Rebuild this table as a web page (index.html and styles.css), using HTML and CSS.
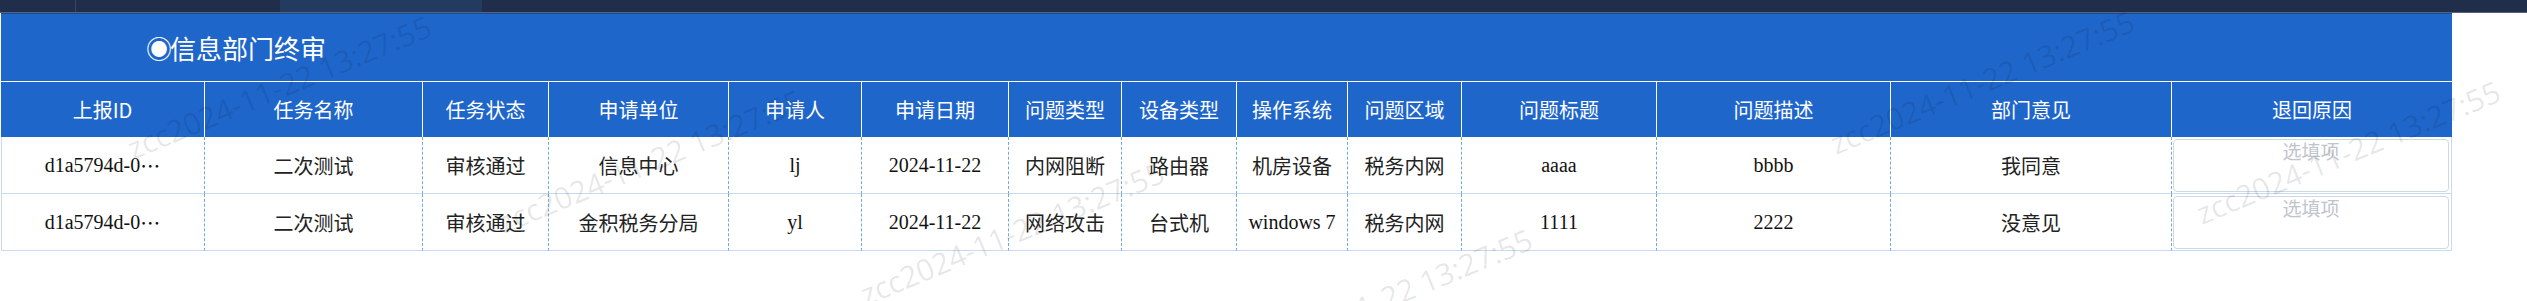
FILE: index.html
```html
<!DOCTYPE html>
<html lang="zh-CN">
<head>
<meta charset="utf-8">
<title>信息部门终审</title>
<link rel="stylesheet" href="styles.css">
</head>
<body>
<header class="topbar">
  <div class="tab tab-a"></div>
  <div class="tab tab-b"></div>
  <div class="tab tab-c"></div>
  <div class="tab tab-rest"></div>
</header>
<main class="panel">
  <h1 class="title"><span class="dot">◉</span>信息部门终审</h1>
  <div class="table">
    <div class="row head">
      <div class="cell">上报ID</div>
      <div class="cell">任务名称</div>
      <div class="cell">任务状态</div>
      <div class="cell">申请单位</div>
      <div class="cell">申请人</div>
      <div class="cell">申请日期</div>
      <div class="cell">问题类型</div>
      <div class="cell">设备类型</div>
      <div class="cell">操作系统</div>
      <div class="cell">问题区域</div>
      <div class="cell">问题标题</div>
      <div class="cell">问题描述</div>
      <div class="cell">部门意见</div>
      <div class="cell">退回原因</div>
    </div>
    <div class="row data">
      <div class="cell first"><span class="lat">d1a5794d-0</span><span class="ell">…</span></div>
      <div class="cell">二次测试</div>
      <div class="cell">审核通过</div>
      <div class="cell">信息中心</div>
      <div class="cell"><span class="lat">lj</span></div>
      <div class="cell"><span class="lat">2024-11-22</span></div>
      <div class="cell">内网阻断</div>
      <div class="cell">路由器</div>
      <div class="cell">机房设备</div>
      <div class="cell">税务内网</div>
      <div class="cell"><span class="lat">aaaa</span></div>
      <div class="cell"><span class="lat">bbbb</span></div>
      <div class="cell">我同意</div>
      <div class="cell last"><textarea class="reason" placeholder="选填项"></textarea></div>
    </div>
    <div class="row data">
      <div class="cell first"><span class="lat">d1a5794d-0</span><span class="ell">…</span></div>
      <div class="cell">二次测试</div>
      <div class="cell">审核通过</div>
      <div class="cell">金积税务分局</div>
      <div class="cell"><span class="lat">yl</span></div>
      <div class="cell"><span class="lat">2024-11-22</span></div>
      <div class="cell">网络攻击</div>
      <div class="cell">台式机</div>
      <div class="cell"><span class="lat">windows 7</span></div>
      <div class="cell">税务内网</div>
      <div class="cell"><span class="lat">1111</span></div>
      <div class="cell"><span class="lat">2222</span></div>
      <div class="cell">没意见</div>
      <div class="cell last"><textarea class="reason" placeholder="选填项"></textarea></div>
    </div>
  </div>
</main>
<div class="watermarks" aria-hidden="true">
  <span class="wm wm1">zcc2024-11-22 13:27:55</span>
  <span class="wm wm2">zcc2024-11-22 13:27:55</span>
  <span class="wm wm3">zcc2024-11-22 13:27:55</span>
  <span class="wm wm4">zcc2024-11-22 13:27:55</span>
  <span class="wm wm6">zcc2024-11-22 13:27:55</span>
  <span class="wm wm7">zcc2024-11-22 13:27:55</span>
</div>
</body>
</html>
```

FILE: styles.css
```css
* {
  box-sizing: border-box;
  margin: 0;
  padding: 0;
}

html, body {
  background: #ffffff;
}

body {
  position: relative;
  width: 2527px;
  height: 301px;
  overflow: hidden;
  font-family: "Noto Sans CJK SC", sans-serif;
}

/* top navigation strip */
.topbar {
  display: flex;
  height: 13px;
  background: #212e4b;
  border-bottom: 1px solid #56637c;
}

.tab {
  height: 12px;
}

.tab-a {
  width: 76px;
  border-right: 1px solid #3a4560;
}

.tab-b {
  width: 204px;
}

.tab-c {
  width: 202px;
  background: #233a61;
}

.tab-rest {
  flex: 1;
}

/* main panel */
.panel {
  width: 2451px;
  margin-left: 1px;
  background: #1f66cb;
  border-top: 1px solid #1b4a92;
}

.title {
  height: 67px;
  padding-left: 145px;
  font-size: 26px;
  font-weight: normal;
  line-height: 67px;
  color: #ffffff;
}

.dot {
  display: inline-block;
  width: 24px;
}

.row {
  display: grid;
  grid-template-columns: 204px 218px 126px 180px 133px 147px 113px 115px 111px 114px 195px 234px 281px 280px;
}

.cell {
  display: flex;
  align-items: center;
  justify-content: center;
  white-space: nowrap;
  overflow: hidden;
}

.head {
  height: 56px;
  border-top: 1px solid #ffffff;
}

.head .cell {
  font-size: 20px;
  color: #ffffff;
  border-right: 1px solid #ffffff;
}

.head .cell:last-child {
  border-right: none;
}

.data {
  height: 57px;
  background: #ffffff;
}

.data .cell {
  font-size: 20px;
  color: #222222;
  border-right: 1px dashed #6fa9da;
  border-bottom: 1px solid #c6dcee;
}

.data .first {
  box-shadow: inset 1px 0 0 #c6dcee;
}

.data .last {
  align-items: stretch;
  padding: 2px 2px 1px 1px;
  border-right: 1px solid #c6dcee;
}

.lat {
  font-family: "Liberation Serif", serif;
  font-size: 20px;
  color: #111111;
}

.ell {
  font-family: "Noto Sans CJK SC", sans-serif;
  font-size: 20px;
  color: #111111;
}

.reason {
  width: 100%;
  height: 100%;
  resize: none;
  border: 1px solid #cdd8e3;
  border-radius: 4px;
  background: #ffffff;
  font-family: "Noto Sans CJK SC", sans-serif;
  font-size: 19px;
  line-height: 22px;
  text-align: center;
  padding: 0;
  outline: none;
}

.reason::placeholder {
  color: #c0c4cc;
}

/* watermark overlay */
.watermarks {
  position: absolute;
  inset: 0;
  pointer-events: none;
  overflow: hidden;
}

.wm {
  position: absolute;
  transform: translate(-50%, -50%) rotate(-22.5deg);
  white-space: nowrap;
  font-family: "Open Sans", sans-serif;
  font-size: 30px;
  color: rgba(0, 0, 0, 0.1);
}

.wm1 { left: 279px; top: 87px; }
.wm2 { left: 650px; top: 161px; }
.wm3 { left: 1012px; top: 233px; }
.wm4 { left: 1380px; top: 300px; }
.wm6 { left: 1982px; top: 82px; }
.wm7 { left: 2348px; top: 152px; }
```
